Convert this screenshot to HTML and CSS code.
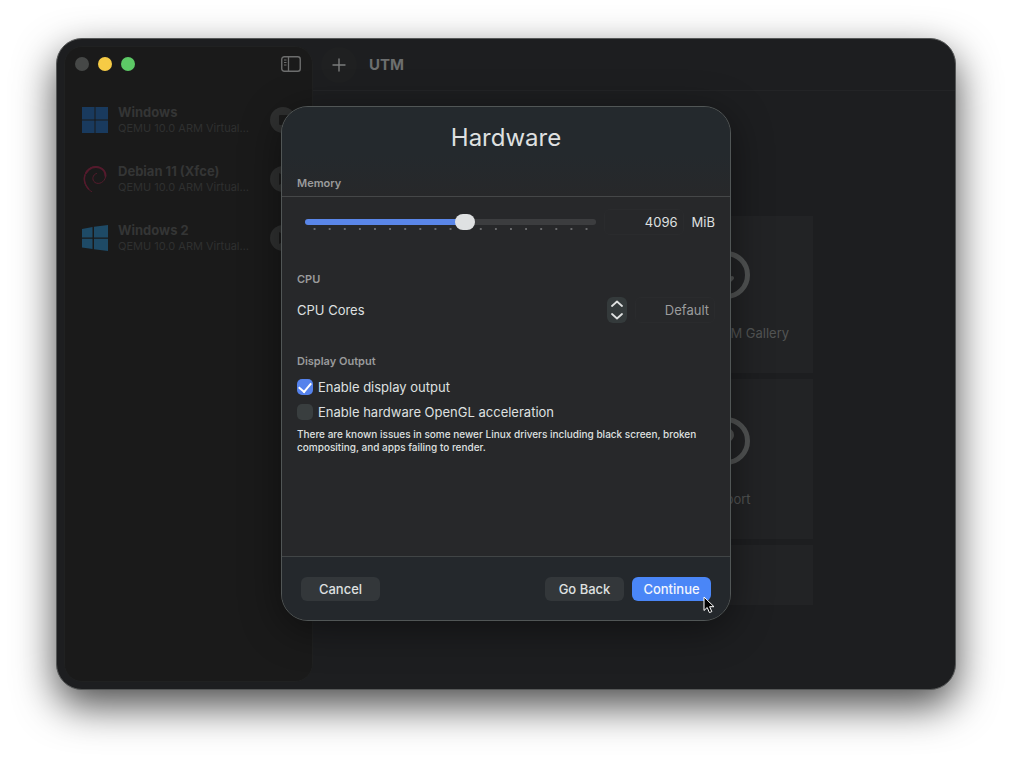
FILE: index.html
```html
<!DOCTYPE html>
<html lang="en">
	<head>
		<meta charset="utf-8" />
		<meta name="viewport" content="width=device-width, initial-scale=1.0" />
		<title>UTM</title>

		<link rel="stylesheet" href="styles.css">
	</head>

	<body>
		<div class="window">
			<aside class="sidebar">
				<div class="sidebar-bar">
					<span class="light light-close"></span>
					<span class="light light-minimize"></span>
					<span class="light light-zoom"></span>
					<svg class="sidebar-toggle" width="20" height="16" viewBox="0 0 20 16" fill="none" stroke="currentColor">
						<rect x="0.75" y="0.75" width="18.5" height="14.5" rx="2.5" stroke-width="1.4" />
						<path d="M7.5 1v14" stroke-width="1.3" />
						<path d="M3 4h2.5M3 6.5h2.5M3 9h2.5" stroke-width="1" />
					</svg>
				</div>

				<ul class="vm-list">
					<li class="vm">
						<svg class="vm-icon" viewBox="0 0 26 26" fill="#193a5e">
							<path d="M0 0h12.500v12.500H0zM13.500 0H26v12.500H13.500zM0 13.500h12.500V26H0zM13.500 13.500H26V26H13.500z" />
						</svg>
						<div class="vm-text">
							<div class="vm-name">Windows</div>
							<div class="vm-info">QEMU 10.0 ARM Virtual…</div>
						</div>
						<svg class="vm-state" viewBox="0 0 26 26">
							<circle cx="13" cy="13" r="13" fill="#303131" />
							<rect x="9" y="8" width="9" height="10" rx="1" fill="#1b1b1b" />
						</svg>
					</li>
					<li class="vm">
						<svg class="vm-icon" viewBox="0 0 26 26" fill="none" stroke="#541a2c" stroke-linecap="round">
							<path d="M10 26C4 22 1.500 16 2.500 10.500C4 3 10 0 15 .8C21 1.500 24.500 6 23.500 11C22.500 16 17 19 13 16.500C9.500 14 10.500 8.500 14.500 7.500" stroke-width="1" />
							<path d="M4 7C7 1.500 13 0 17.500 1.600C21.500 3 23.500 6 23.500 10" stroke-width="2" />
							<path d="M3 9C1.500 14 3 19 6.500 23" stroke-width="1.500" />
						</svg>
						<div class="vm-text">
							<div class="vm-name">Debian 11 (Xfce)</div>
							<div class="vm-info">QEMU 10.0 ARM Virtual…</div>
						</div>
						<svg class="vm-state" viewBox="0 0 26 26">
							<circle cx="13" cy="13" r="13" fill="#303131" />
							<path d="M9 7l10 6-10 6z" fill="#1b1b1b" />
						</svg>
					</li>
					<li class="vm">
						<svg class="vm-icon" viewBox="0 0 26 26" fill="#1e4a66">
							<path d="M0 4l10.500-2v10.500H0zM12 1.800L26 0v12.500H12zM0 13.700h10.500V24L0 22.500zM12 13.700h14V26l-14-1.800z" />
						</svg>
						<div class="vm-text">
							<div class="vm-name">Windows 2</div>
							<div class="vm-info">QEMU 10.0 ARM Virtual…</div>
						</div>
						<svg class="vm-state" viewBox="0 0 26 26">
							<circle cx="13" cy="13" r="13" fill="#303131" />
							<path d="M9 7l10 6-10 6z" fill="#1b1b1b" />
						</svg>
					</li>
				</ul>
			</aside>

			<main class="content">
				<div class="toolbar">
					<span class="add">
						<svg width="14" height="14" viewBox="0 0 14 14" fill="none" stroke="currentColor" stroke-width="1.4" stroke-linecap="round">
							<path d="M7 1v12M1 7h12" />
						</svg>
					</span>
					<h1 class="app-title">UTM</h1>
				</div>

				<div class="cards">
					<div class="card">
						<svg width="48" height="48" viewBox="0 0 48 48" fill="none" stroke="currentColor" stroke-width="5" stroke-linecap="round">
							<circle cx="24" cy="24" r="21.5" />
							<path d="M24 13v20M18 27l6 6 6-6" stroke-width="4" />
						</svg>
						<span>Browse UTM Gallery</span>
					</div>
					<div class="card card-support">
						<svg width="48" height="48" viewBox="0 0 48 48" fill="none" stroke="currentColor" stroke-width="5" stroke-linecap="round">
							<circle cx="24" cy="24" r="21.5" />
							<path d="M18 19c0-8 12-8 12-1c0 5-6 5-6 10M24 34v1" stroke-width="4" />
						</svg>
						<span>Support</span>
					</div>
					<div class="card card-wide"></div>
				</div>
			</main>

			<div class="sheet-layer">
				<form class="sheet">
					<header class="sheet-header">
						<h2 class="sheet-title">Hardware</h2>
						<h3 class="group-title">Memory</h3>
					</header>

					<div class="sheet-body">
						<div class="row memory-row">
							<div class="slider">
								<input type="range" class="slider-input" min="0" max="18" value="10" aria-label="Memory" />
								<div class="slider-ticks"></div>
							</div>
							<input type="text" class="field" id="memory" value="4096" />
							<label for="memory">MiB</label>
						</div>

						<h3 class="group-title">CPU</h3>
						<div class="row cpu-row">
							<label class="row-label" for="cores">CPU Cores</label>
							<div class="stepper">
								<button type="button" aria-label="More cores">
									<svg width="12" height="7" viewBox="0 0 12 7"><path d="M1 6l5-4.500L11 6" /></svg>
								</button>
								<button type="button" aria-label="Fewer cores">
									<svg width="12" height="7" viewBox="0 0 12 7"><path d="M1 1l5 4.500L11 1" /></svg>
								</button>
							</div>
							<input type="text" class="field" id="cores" placeholder="Default" />
						</div>

						<h3 class="group-title">Display Output</h3>
						<div class="checks">
							<label class="check"><input type="checkbox" checked /> Enable display output</label>
							<label class="check"><input type="checkbox" /> Enable hardware OpenGL acceleration</label>
						</div>
						<p class="note">There are known issues in some newer Linux drivers including black screen, broken compositing, and apps failing to render.</p>
					</div>

					<footer class="sheet-footer">
						<button type="button" class="button button-cancel">Cancel</button>
						<button type="button" class="button">Go Back</button>
						<div class="continue">
							<button type="button" class="button button-primary">Continue</button>
							<svg class="cursor" width="12" height="18" viewBox="0 0 12 18">
								<path d="M1 1v13.500l3.200-3L6.400 16.600l2.400-1L6.600 10.700H11z" fill="#000" stroke="#fff" stroke-linejoin="round" />
							</svg>
						</div>
					</footer>
				</form>
			</div>
		</div>
	</body>
</html>
```

FILE: styles.css
```css
* {
	box-sizing: border-box;
}

body {
	display: flex;
	min-height: 100vh;
	margin: 0;
	padding: 38px 56px 74px;

	background: #fff;
	color: #dfe0e0;
	font: 13px/16px Inter, "Liberation Sans", sans-serif;
}

h1, h2, h3, p, ul {
	margin: 0;
	padding: 0;
}

input, button {
	font: inherit;
	color: inherit;
}

.window {
	position: relative;
	display: flex;
	flex: 1;

	border: 1px solid #555757;
	border-radius: 26px;
	background: #1d1e20;
	box-shadow: 0 16px 40px rgba(0, 0, 0, 0.7);
}



/* Sidebar */
.sidebar {
	flex: none;
	width: 249px;
	margin: 7px 0 7px 7px;

	border: 1px solid #202121;
	border-radius: 18px;
	background: #1a1a1a;
}

.sidebar-bar {
	display: flex;
	align-items: center;
	gap: 9px;
	height: 34px;
	padding: 0 11px 0 10px;
}

.light {
	width: 14px;
	height: 14px;
	border-radius: 50%;
}
.light-close    { background: #464847; }
.light-minimize { background: #f6cb45; }
.light-zoom     { background: #5dc966; }

.sidebar-toggle {
	margin-left: auto;
	color: #6c6d6d;
}

.vm-list {
	padding: 17px 0 0 17px;
	list-style: none;
}

.vm {
	display: flex;
	align-items: center;
	height: 44px;
	margin-bottom: 15px;
}

.vm-icon,
.vm-state {
	flex: none;
	width: 26px;
	height: 26px;
}

.vm-text {
	flex: none;
	width: 162px;
	padding-left: 10px;
	color: #2f3030;
}

.vm-name {
	font-weight: 700;
	color: #343535;
}

.vm-info {
	font-size: 11px;
	white-space: nowrap;
}



/* Library pane */
.content {
	flex: 1;
}

.toolbar {
	display: flex;
	align-items: center;
	gap: 12px;
	height: 52px;
	padding-left: 8px;
	border-bottom: 1px solid #232426;
}

.add {
	display: grid;
	place-items: center;
	width: 36px;
	height: 36px;

	border-radius: 50%;
	background: #1f2021;
	color: #7b7c7c;
}

.app-title {
	font-size: 15px;
	color: #6c6e6e;
}

.cards {
	display: grid;
	grid-template: 157px 160px 60px / 173px 173px;
	justify-content: center;
	gap: 6px 11px;
	padding-top: 125px;
}

.card {
	display: flex;
	flex-direction: column;
	grid-column: 2;
	align-items: center;
	gap: 26px;
	padding-top: 35px;

	background: #222325;
	color: #525454;
	white-space: nowrap;
}

.card-support {
	padding-top: 38px;
}

.card-wide {
	grid-column: 1 / 3;
}



/* Sheet over the window */
.sheet-layer {
	position: absolute;
	inset: 0;
	display: flex;
	align-items: flex-start;
	justify-content: center;
	padding-top: 67px;
}

.sheet {
	display: flex;
	flex-direction: column;
	width: 450px;
	min-height: 515px;

	border: 1px solid #515656;
	border-radius: 27px;
	background: #27282a;
	box-shadow: 0 8px 40px rgba(0, 0, 0, 0.45);
}

.sheet-header {
	padding: 15px 15px 5px;
	border-bottom: 1px solid #454748;
	border-radius: 26px 26px 0 0;
	background: linear-gradient(#24292d 55%, #27282a);
}

.sheet-title {
	margin-bottom: 21px;
	font-size: 24px;
	font-weight: 400;
	line-height: 32px;
	text-align: center;
}

.group-title {
	font-size: 11px;
	font-weight: 600;
	line-height: 16px;
	color: #9a9b9c;
}

.sheet-body {
	flex: 1;
	padding: 12px 15px;
}

.row {
	display: flex;
	align-items: center;
	height: 26px;
}

.memory-row {
	gap: 8px;
	margin-bottom: 36px;
	padding-left: 8px;
}

.cpu-row {
	gap: 8px;
	margin: 10px 0 30px;
}

.row-label {
	flex: 1;
}

.field {
	width: 80px;
	height: 26px;
	padding: 0 5px;

	border: 1px solid #2a2b2d;
	border-radius: 6px;
	background: none;
	text-align: right;
}
.field::placeholder {
	color: #9b9c9d;
}

.slider {
	position: relative;
	flex: 1;
	height: 16px;
}

.slider-input {
	position: relative;
	z-index: 1;
	display: block;
	width: 100%;
	height: 16px;
	margin: 0;

	-webkit-appearance: none;
	appearance: none;
	background: none;
}

.slider-input::-webkit-slider-runnable-track {
	height: 6px;
	border-radius: 3px;
	background: linear-gradient(90deg, #5a86e8 55%, #3c3d3f 55%);
}

.slider-input::-webkit-slider-thumb {
	-webkit-appearance: none;
	width: 20px;
	height: 16px;
	margin-top: -5px;
	border-radius: 8px;
	background: #dfe1e2;
}

/* One dot for each of the 19 stops */
.slider-ticks {
	position: absolute;
	right: 2px;
	bottom: 0;
	left: 2px;
	height: 2px;
	background: radial-gradient(circle, #68696b 1px, transparent 1px) 0 0 / 15px 2px space;
}

.stepper {
	display: flex;
	flex-direction: column;
	width: 20px;
	height: 26px;
	border-radius: 6px;
	background: #343a3b;
}

.stepper button {
	display: grid;
	flex: 1;
	place-items: center;
	padding: 0;
	border: 0;
	background: none;
}

.stepper path {
	fill: none;
	stroke: #dfe1e1;
	stroke-width: 1.8;
	stroke-linecap: round;
	stroke-linejoin: round;
}

.checks {
	display: grid;
	gap: 9px;
	margin: 10px 0 8px;
}

.check {
	display: flex;
	gap: 5px;
}

.check input {
	display: grid;
	place-items: center;
	width: 16px;
	height: 16px;
	margin: 0;

	-webkit-appearance: none;
	appearance: none;
	border-radius: 5px;
	background: #393e3f;
}
.check input:checked {
	background: #5582ec;
}
.check input:checked::before {
	content: "";
	width: 6px;
	height: 10px;
	margin-bottom: 2px;
	border: solid #fff;
	border-width: 0 2px 2px 0;
	transform: rotate(40deg);
}

.note {
	font-size: 10px;
	font-weight: 500;
	line-height: 13px;
}

.sheet-footer {
	display: flex;
	gap: 8px;
	padding: 20px 19px 19px;
	border-top: 1px solid #414546;
	border-radius: 0 0 26px 26px;
	background: #24282c;
}

.button {
	width: 79px;
	height: 24px;
	padding: 0;
	border: 0;
	border-radius: 6px;
	background: #33373a;
	font-weight: 500;
}

.button-cancel {
	margin-right: auto;
}

.button-primary {
	background: #4a86f7;
	color: #f2f5fd;
}

.continue {
	position: relative;
}

.cursor {
	position: absolute;
	top: 19px;
	right: -4px;
}
```
